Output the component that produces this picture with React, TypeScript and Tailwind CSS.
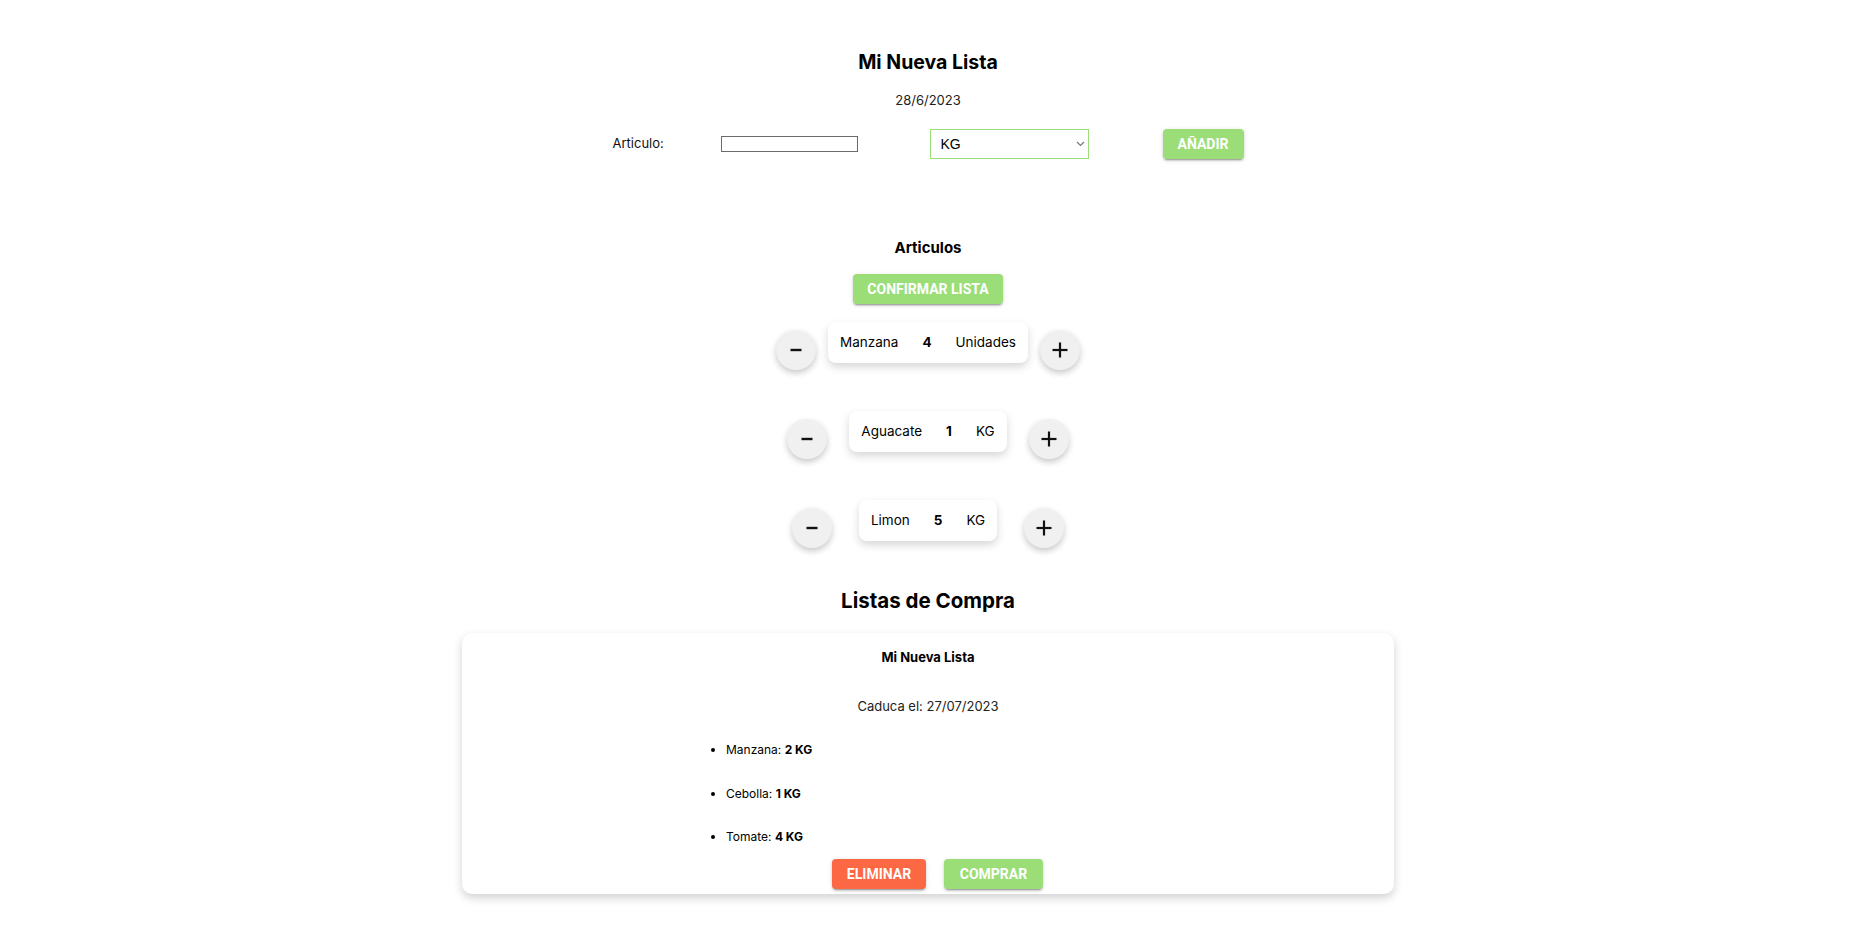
import React, { useState } from "react";

interface Item {
  id: string;
  name: string;
  qty: number;
  unit: string;
  gap: string;
}

const font = "font-['Inter','Noto_Sans',sans-serif]";
const btnFont = "font-['Roboto','Liberation_Sans',sans-serif]";
const btnShadow =
  "shadow-[0_3px_1px_-2px_rgba(0,0,0,0.2),0_2px_2px_0_rgba(0,0,0,0.14),0_1px_5px_0_rgba(0,0,0,0.12)]";

const MinusIcon = () => (
  <svg width="14" height="14" viewBox="0 0 14 14">
    <line x1="1.5" y1="7" x2="12.5" y2="7" stroke="#111" strokeWidth="2.4" />
  </svg>
);

const PlusIcon = () => (
  <svg width="18" height="18" viewBox="0 0 18 18">
    <line x1="1.5" y1="9" x2="16.5" y2="9" stroke="#111" strokeWidth="2.2" />
    <line x1="9" y1="1.5" x2="9" y2="16.5" stroke="#111" strokeWidth="2.2" />
  </svg>
);

const CircleButton: React.FC<{ children: React.ReactNode; onClick: () => void }> = ({ children, onClick }) => (
  <button
    onClick={onClick}
    className="mt-2 w-10 h-10 rounded-full bg-[#f0f0f0] flex items-center justify-center shadow-[0_3px_6px_rgba(0,0,0,0.22)]"
  >
    {children}
  </button>
);

const App: React.FC = () => {
  const [items, setItems] = useState<Item[]>([
    { id: "1", name: "Manzana", qty: 4, unit: "Unidades", gap: "gap-[12px]" },
    { id: "2", name: "Aguacate", qty: 1, unit: "KG", gap: "gap-[22px]" },
    { id: "3", name: "Limon", qty: 5, unit: "KG", gap: "gap-[27px]" },
  ]);

  const changeQty = (id: string, delta: number) => {
    setItems(prev => prev.map(i => (i.id === id ? { ...i, qty: Math.max(0, i.qty + delta) } : i)));
  };

  return (
    <div className={`min-h-screen bg-white pr-[5px] text-black ${font}`}>
      <div className="flex flex-col items-center">
        <h1 className="mt-[50px] text-[19.5px] leading-[24px] font-bold">Mi Nueva Lista</h1>
        <p className="mt-[16px] text-[13px] leading-[20px] text-[#222]">28/6/2023</p>

        {/* formulario */}
        <div className="mt-[19px] h-[30px] flex items-center w-[631px]">
          <label className="w-[53px] whitespace-nowrap text-[13px] text-[#111]">Articulo:</label>
          <input type="text" className="ml-[55px] w-[137px] h-[16px] border border-[#6b6b6b] bg-white" />
          <div className="ml-[72px] relative w-[159px] h-[30px]">
            <select className="appearance-none w-full h-full border border-[#9bde78] bg-white pl-[10px] text-[14px] text-black font-['Liberation_Sans',sans-serif] outline-none">
              <option>KG</option>
              <option>Unidades</option>
            </select>
            <svg className="absolute right-[4px] top-[12px] pointer-events-none" width="9" height="6" viewBox="0 0 9 6">
              <path d="M1 1l3.5 3.5L8 1" fill="none" stroke="#777" strokeWidth="1.2" />
            </svg>
          </div>
          <button
            className={`ml-[74px] h-[30px] w-[81px] rounded-[4px] bg-[#9bde78] text-white text-[14px] font-bold uppercase ${btnFont} ${btnShadow}`}
          >
            Añadir
          </button>
        </div>

        <h3 className="mt-[79px] text-[15px] leading-[20px] font-bold">Articulos</h3>
        <button
          className={`mt-[16px] h-[30px] w-[150px] rounded-[4px] bg-[#9bde78] text-white text-[14px] font-bold uppercase ${btnFont} ${btnShadow}`}
        >
          Confirmar lista
        </button>

        {/* articulos */}
        <div className="mt-[18px] flex flex-col gap-[41px]">
          {items.map(item => (
            <div key={item.id} className={`flex items-start justify-center ${item.gap}`}>
              <CircleButton onClick={() => changeQty(item.id, -1)}>
                <MinusIcon />
              </CircleButton>
              <div className="h-[41px] px-3 flex items-center gap-[24px] bg-white rounded-[8px] shadow-[0_4px_8px_rgba(0,0,0,0.16)] text-[13.5px]">
                <span>{item.name}</span>
                <span className="font-bold">{item.qty}</span>
                <span>{item.unit}</span>
              </div>
              <CircleButton onClick={() => changeQty(item.id, 1)}>
                <PlusIcon />
              </CircleButton>
            </div>
          ))}
        </div>

        <h2 className="mt-[39px] text-[20.5px] leading-[28px] font-bold">Listas de Compra</h2>

        {/* lista guardada */}
        <div className="mt-[18px] w-[932px] h-[261px] bg-white rounded-[10px] shadow-[0_4px_10px_rgba(0,0,0,0.18)] flex flex-col items-center pt-[14px]">
          <h4 className="text-[13px] leading-[20px] font-bold">Mi Nueva Lista</h4>
          <p className="mt-[29px] text-[13px] leading-[20px] text-[#222]">Caduca el: 27/07/2023</p>
          <ul className="self-start ml-[264px] mt-[24px] list-disc text-[12px] leading-[20px] flex flex-col gap-[23.5px]">
            <li>
              Manzana: <b>2 KG</b>
            </li>
            <li>
              Cebolla: <b>1 KG</b>
            </li>
            <li>
              Tomate: <b>4 KG</b>
            </li>
          </ul>
          <div className="mt-[12px] ml-[19px] flex gap-[18px]">
            <button
              className={`h-[30px] w-[94px] rounded-[4px] bg-[#fc6744] text-white text-[14px] font-bold uppercase ${btnFont} ${btnShadow}`}
            >
              Eliminar
            </button>
            <button
              className={`h-[30px] w-[99px] rounded-[4px] bg-[#9bde78] text-white text-[14px] font-bold uppercase ${btnFont} ${btnShadow}`}
            >
              Comprar
            </button>
          </div>
        </div>
        <div className="h-[40px]" />
      </div>
    </div>
  );
};

export default App;
